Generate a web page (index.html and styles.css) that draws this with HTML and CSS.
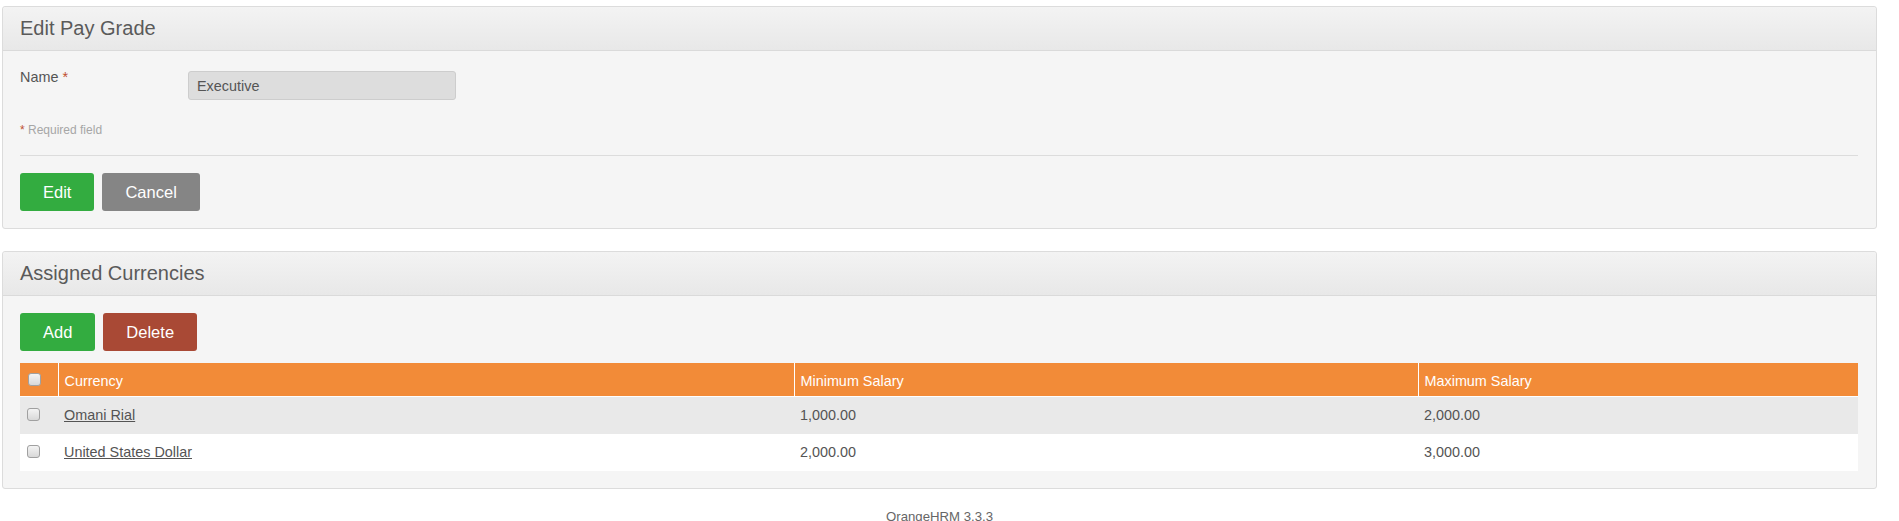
FILE: index.html
```html
<!DOCTYPE html>
<html>
<head>
<meta charset="utf-8">
<title>Edit Pay Grade</title>
<link rel="stylesheet" href="styles.css">
</head>
<body>
<div class="page">
  <section class="box">
    <div class="box-head"><h1>Edit Pay Grade</h1></div>
    <div class="box-body">
      <div class="form-row">
        <label class="form-label">Name <span class="req">*</span></label>
        <input class="text-input" type="text" value="Executive" disabled>
      </div>
      <p class="req-note"><span class="req">*</span> Required field</p>
      <hr class="divider">
      <div class="actions">
        <button class="btn btn-green">Edit</button>
        <button class="btn btn-gray">Cancel</button>
      </div>
    </div>
  </section>

  <section class="box box-second">
    <div class="box-head"><h1>Assigned Currencies</h1></div>
    <div class="box-body">
      <div class="actions">
        <button class="btn btn-green">Add</button>
        <button class="btn btn-red">Delete</button>
      </div>
      <table class="grid">
        <colgroup>
          <col class="c-check">
          <col class="c-cur">
          <col class="c-min">
          <col class="c-max">
        </colgroup>
        <thead>
          <tr>
            <th class="chk-cell"><input type="checkbox" class="chk"></th>
            <th>Currency</th>
            <th>Minimum Salary</th>
            <th>Maximum Salary</th>
          </tr>
        </thead>
        <tbody>
          <tr class="odd">
            <td class="chk-cell"><input type="checkbox" class="chk"></td>
            <td><a href="#">Omani Rial</a></td>
            <td>1,000.00</td>
            <td>2,000.00</td>
          </tr>
          <tr class="even">
            <td class="chk-cell"><input type="checkbox" class="chk"></td>
            <td><a href="#">United States Dollar</a></td>
            <td>2,000.00</td>
            <td>3,000.00</td>
          </tr>
        </tbody>
      </table>
    </div>
  </section>

  <footer class="footer">OrangeHRM 3.3.3</footer>
</div>
</body>
</html>
```

FILE: styles.css
```css
html, body {
  margin: 0;
  padding: 0;
  background: #ffffff;
}

body {
  font-family: "Liberation Sans", Arial, sans-serif;
  font-size: 14.4px;
  color: #545454;
}

.page {
  width: 1875px;
  margin-left: 2px;
  padding-top: 6px;
}

.box {
  background: #f5f5f5;
  border: 1px solid #dcdcdc;
  border-radius: 3px;
}

.box-second {
  margin-top: 22px;
}

.box-head {
  height: 43px;
  display: flex;
  align-items: center;
  padding: 0 17px;
  background: linear-gradient(#f3f3f3, #e8e8e8);
  border-bottom: 1px solid #dadada;
  border-radius: 3px 3px 0 0;
}

.box-head h1 {
  margin: 0;
  font-size: 20px;
  font-weight: normal;
  line-height: 23px;
  color: #5a5a5a;
}

.box-body {
  padding: 17px 18px 17px 17px;
}

.form-row {
  display: flex;
  align-items: flex-start;
  padding-top: 3px;
}

.form-label {
  width: 168px;
  flex: none;
  line-height: 17px;
  margin-top: -2px;
  color: #545454;
}

.req {
  color: #c0502e;
}

.text-input {
  width: 268px;
  height: 29px;
  box-sizing: border-box;
  margin: 0;
  padding: 0 8px;
  border: 1px solid #cdcdcd;
  border-radius: 3px;
  background: #dddddd;
  font-family: "Liberation Sans", Arial, sans-serif;
  font-size: 14.4px;
  color: #555555;
}

.req-note {
  margin: 23px 0 0;
  font-size: 12px;
  line-height: 14px;
  color: #a6a6a6;
}

.divider {
  margin: 18px 0 17px;
  border: 0;
  border-top: 1px solid #dcdcdc;
  height: 0;
}

.actions {
  display: flex;
  gap: 8px;
}

.btn {
  height: 38px;
  padding: 0 23px;
  border: 0;
  border-radius: 3px;
  font-family: "Liberation Sans", Arial, sans-serif;
  font-size: 16.5px;
  color: #ffffff;
  cursor: pointer;
}

.btn-green { background: #33ac40; }
.btn-gray { background: #858585; }
.btn-red { background: #a94935; }

.grid {
  margin-top: 12px;
  width: 1838px;
  table-layout: fixed;
  border-collapse: collapse;
}

.c-check { width: 38px; }
.c-cur { width: 736px; }
.c-min { width: 624px; }
.c-max { width: 440px; }

.grid th {
  background: #f28b38;
  color: #ffffff;
  font-weight: normal;
  text-align: left;
  height: 33px;
  box-sizing: border-box;
  padding: 10px 6px 5px;
  border-right: 1px solid #ffffff;
  border-bottom: 1px solid #ffffff;
  vertical-align: middle;
  line-height: 17px;
}

.grid th:last-child {
  border-right: 0;
}

.grid td {
  height: 37px;
  padding: 0 6px;
  vertical-align: middle;
  color: #545454;
  line-height: 17px;
}

.grid .chk-cell {
  padding: 0 0 0 7px;
}

.grid th.chk-cell {
  padding: 0 0 0 8px;
}

.grid tr.odd td { background: #e9e9e9; }
.grid tr.even td { background: #ffffff; }

.grid a {
  color: #545454;
  text-decoration: underline;
}

.chk {
  appearance: none;
  -webkit-appearance: none;
  display: block;
  width: 13px;
  height: 13px;
  margin: 0;
  border: 1px solid #a0a0a0;
  border-radius: 3px;
  background: linear-gradient(#f4f4f4, #d8d8d8);
  box-sizing: border-box;
}

.grid th .chk {
  margin-top: 0;
}

.grid td .chk {
  margin-top: -1px;
}

.footer {
  margin-top: 20px;
  text-align: center;
  font-size: 13.2px;
  line-height: 16px;
  color: #666666;
}
```
